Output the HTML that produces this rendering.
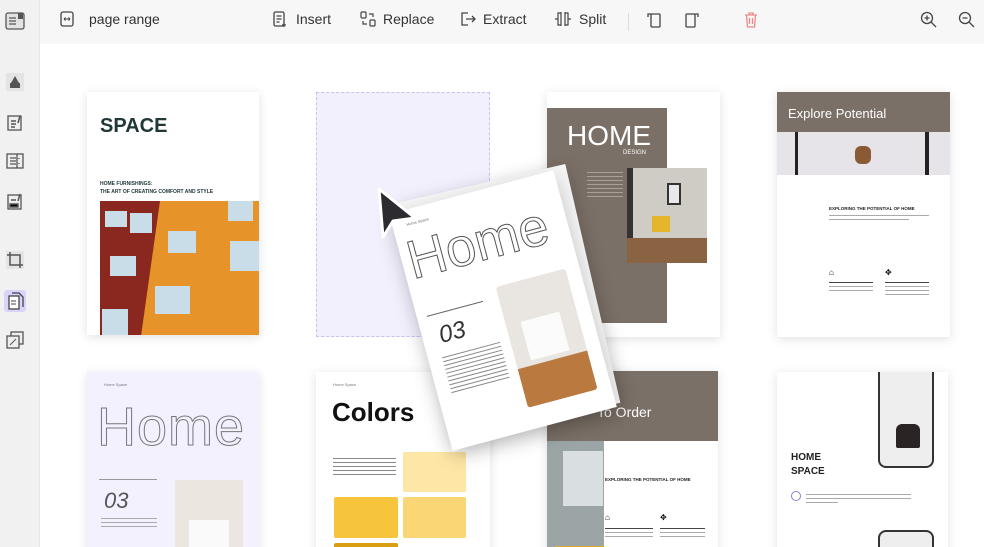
<!DOCTYPE html>
<html><head><meta charset="utf-8"><style>
*{margin:0;padding:0;box-sizing:border-box}
html,body{width:984px;height:547px;overflow:hidden}
body{background:#fff;font-family:"Liberation Sans",sans-serif;position:relative}
.side{position:absolute;left:0;top:0;width:40px;height:547px;background:#f1f1f1;border-right:1px solid #e6e6e6;z-index:5}
.sic{position:absolute;left:6px;width:18px;height:18px}
.top{position:absolute;left:40px;top:0;width:944px;height:44px;background:#f7f7f7;z-index:5}
.tb{position:absolute;top:11px;font-size:14px;color:#333;display:flex;align-items:center;gap:7px}
.pg{position:absolute;background:#fff;box-shadow:0 2px 10px rgba(0,0,0,.12)}
.a{position:absolute}
.lines div{height:1px;background:#aaa;margin-bottom:3px}
</style></head><body>
<div class="side">
 <svg class="sic" style="top:12px;left:5px;width:20px;height:18px" viewBox="0 0 20 18"><rect x="1" y="1" width="18" height="16" rx="2" fill="#e2e2e2" stroke="#555" stroke-width="1.3"/><path d="M4 6h7M4 9h7M4 12h7" stroke="#555" stroke-width="1.3"/><rect x="13" y="1" width="5" height="6" fill="#555"/></svg>
 <svg class="sic" style="top:73px" viewBox="0 0 18 18"><rect x="0" y="0" width="18" height="18" fill="#e4e4e4"/><path d="M9 3l4 7H5z M4 10h10v5H4z" fill="#555"/></svg>
 <svg class="sic" style="top:114px" viewBox="0 0 18 18"><rect x="2" y="2" width="13" height="14" fill="#eee" stroke="#555" stroke-width="1.3"/><path d="M5 7h5M5 10h5M5 13h4M14 2l-2 7" stroke="#555" stroke-width="1.5"/></svg>
 <svg class="sic" style="top:152px" viewBox="0 0 18 18"><rect x="1" y="2" width="16" height="14" fill="#eee" stroke="#555" stroke-width="1.3"/><path d="M4 6h6M4 9h6M4 12h6M13 6v1M13 11v1M11 2v14" stroke="#555" stroke-width="1.3"/></svg>
 <svg class="sic" style="top:193px" viewBox="0 0 18 18"><rect x="2" y="2" width="13" height="14" fill="#eee" stroke="#555" stroke-width="1.3"/><path d="M5 7h5M4 11h8v3H4zM14 1l-2 7" stroke="#555" stroke-width="1.5"/></svg>
 <svg class="sic" style="top:251px" viewBox="0 0 18 18"><rect width="18" height="18" fill="#e4e4e4"/><path d="M4 1v13h13M1 4h13v13" fill="none" stroke="#555" stroke-width="1.5"/></svg>
 <div class="a" style="left:4px;top:290px;width:22px;height:22px;background:#dcd3fb;border-radius:3px"></div>
 <svg class="sic" style="top:292px;left:7px" viewBox="0 0 18 18"><rect x="2" y="4" width="10" height="13" fill="#fff" stroke="#444" stroke-width="1.3"/><path d="M5 1h7l4 4v10" fill="none" stroke="#444" stroke-width="1.3"/><path d="M4 9h5M4 12h5" stroke="#444"/></svg>
 <svg class="sic" style="top:331px" viewBox="0 0 18 18"><rect x="5" y="1" width="12" height="12" fill="#eee" stroke="#555" stroke-width="1.3"/><rect x="1" y="5" width="12" height="12" fill="#eee" stroke="#555" stroke-width="1.3"/><path d="M4 14l6-6" stroke="#555"/></svg>
</div>
<div class="top">
 <div class="tb" style="left:20px"><svg width="14" height="16" viewBox="0 0 14 16"><rect x="1" y="1" width="12" height="14" rx="2" fill="none" stroke="#444" stroke-width="1.3"/><path d="M4 8h6M4 8l1.5-1.5M4 8l1.5 1.5M10 8l-1.5-1.5M10 8l-1.5 1.5" stroke="#444"/></svg><span style="margin-left:8px">page range</span></div>
 <div class="tb" style="left:233px"><svg width="14" height="16" viewBox="0 0 14 16"><rect x="1" y="1" width="10" height="14" rx="1.5" fill="none" stroke="#444" stroke-width="1.3"/><path d="M3.5 5h5M3.5 8h5M3.5 11h3M11 12v4M9 14h4" stroke="#444" stroke-width="1.2"/></svg><span style="margin-left:2px">Insert</span></div>
 <div class="tb" style="left:320px"><svg width="16" height="16" viewBox="0 0 16 16"><rect x="1" y="1" width="5" height="6" rx="1" fill="none" stroke="#444" stroke-width="1.2"/><rect x="10" y="9" width="5" height="6" rx="1" fill="none" stroke="#444" stroke-width="1.2"/><path d="M9 3h4v3M3 10v3h4" fill="none" stroke="#444" stroke-width="1.2"/></svg><span>Replace</span></div>
 <div class="tb" style="left:420px"><svg width="16" height="16" viewBox="0 0 16 16"><path d="M8 2H2v12h6" fill="none" stroke="#444" stroke-width="1.3"/><path d="M6 8h9M12 5l3 3-3 3" fill="none" stroke="#444" stroke-width="1.3"/></svg><span>Extract</span></div>
 <div class="tb" style="left:514px"><svg width="18" height="16" viewBox="0 0 18 16"><path d="M7 1v14M11 1v14M7 2H4v12h3M11 2h3v12h-3M1 8h3M14 8h3" fill="none" stroke="#444" stroke-width="1.2"/></svg><span>Split</span></div>
 <div class="a" style="left:588px;top:13px;width:1px;height:18px;background:#ddd"></div>
 <svg class="a" style="left:606px;top:11px" width="16" height="18" viewBox="0 0 16 18"><rect x="5" y="3" width="9" height="13" rx="1" fill="none" stroke="#444" stroke-width="1.3"/><path d="M5 3H2v3" fill="none" stroke="#444" stroke-width="1.3"/></svg>
 <svg class="a" style="left:644px;top:11px" width="16" height="18" viewBox="0 0 16 18"><rect x="2" y="3" width="9" height="13" rx="1" fill="none" stroke="#444" stroke-width="1.3"/><path d="M11 3h3v3" fill="none" stroke="#444" stroke-width="1.3"/></svg>
 <svg class="a" style="left:704px;top:11px" width="14" height="17" viewBox="0 0 14 17"><path d="M1 4h12M5 4V2h4v2M2.5 4l1 12h7l1-12M5.5 7v6M8.5 7v6" fill="none" stroke="#ec8a8a" stroke-width="1.3"/></svg>
 <svg class="a" style="left:880px;top:11px" width="17" height="17" viewBox="0 0 17 17"><circle cx="7" cy="7" r="5.5" fill="none" stroke="#444" stroke-width="1.3"/><path d="M11 11l5 5M4.5 7h5M7 4.5v5" stroke="#444" stroke-width="1.3"/></svg>
 <svg class="a" style="left:918px;top:11px" width="17" height="17" viewBox="0 0 17 17"><circle cx="7" cy="7" r="5.5" fill="none" stroke="#444" stroke-width="1.3"/><path d="M11 11l5 5M4.5 7h5" stroke="#444" stroke-width="1.3"/></svg>
</div>

<!-- Row 1 -->
<div class="pg" style="left:87px;top:92px;width:172px;height:243px">
 <div class="a" style="left:13px;top:23px;font-size:20px;font-weight:bold;color:#213838">SPACE</div>
 <div class="a" style="left:13px;top:88px;font-size:5px;font-weight:bold;color:#213838;line-height:8px">HOME FURNISHINGS:<br>THE ART OF CREATING COMFORT AND STYLE</div>
 <div class="a" style="left:13px;top:109px;width:159px;height:134px;background:#e6942a;overflow:hidden">
  <div class="a" style="left:0;top:0;width:60px;height:140px;background:#8a2820;transform:skewX(-8deg);transform-origin:top left"></div>
  <div class="a" style="left:5px;top:10px;width:22px;height:16px;background:#c9dde8"></div>
  <div class="a" style="left:30px;top:12px;width:22px;height:20px;background:#c9dde8"></div>
  <div class="a" style="left:10px;top:55px;width:26px;height:20px;background:#c9dde8"></div>
  <div class="a" style="left:68px;top:30px;width:28px;height:22px;background:#c9dde8"></div>
  <div class="a" style="left:130px;top:40px;width:29px;height:30px;background:#c9dde8"></div>
  <div class="a" style="left:55px;top:85px;width:35px;height:28px;background:#c9dde8"></div>
  <div class="a" style="left:128px;top:0;width:25px;height:20px;background:#c9dde8"></div>
  <div class="a" style="left:2px;top:108px;width:26px;height:26px;background:#c9dde8"></div>
 </div>
</div>
<div class="a" style="left:316px;top:92px;width:174px;height:245px;background:#f2f0fd;border:1px dashed #c8c0ef"></div>
<div class="pg" style="left:547px;top:92px;width:173px;height:245px">
 <div class="a" style="left:0;top:16px;width:120px;height:215px;background:#7b7067"></div>
 <div class="a" style="left:20px;top:28px;font-size:28px;color:#fff">HOME</div>
 <div class="a" style="left:76px;top:58px;font-size:6px;color:#fff">DESIGN</div>
 <div class="a lines" style="left:40px;top:80px;width:36px"><div style="background:#aaa09a"></div><div style="background:#aaa09a"></div><div style="background:#aaa09a"></div><div style="background:#aaa09a"></div><div style="background:#aaa09a"></div><div style="background:#aaa09a"></div><div style="background:#aaa09a"></div></div>
 <div class="a" style="left:80px;top:76px;width:80px;height:95px;background:#cfcbc5">
  <div class="a" style="left:0;top:0;width:6px;height:95px;background:#333"></div>
  <div class="a" style="left:0;top:70px;width:80px;height:25px;background:#8a6442"></div>
  <div class="a" style="left:25px;top:48px;width:18px;height:16px;background:#e5b62b"></div>
  <div class="a" style="left:40px;top:15px;width:14px;height:22px;border:2px solid #333;background:#e8e8e8"></div>
 </div>
</div>
<div class="pg" style="left:777px;top:92px;width:173px;height:245px">
 <div class="a" style="left:0;top:0;width:173px;height:40px;background:#7b7067"></div>
 <div class="a" style="left:11px;top:14px;font-size:13px;color:#fff">Explore Potential</div>
 <div class="a" style="left:0;top:40px;width:173px;height:43px;background:#e6e4e8">
  <div class="a" style="left:18px;top:0;width:3px;height:43px;background:#222"></div>
  <div class="a" style="left:148px;top:0;width:4px;height:43px;background:#222"></div>
  <div class="a" style="left:78px;top:14px;width:16px;height:18px;background:#8a5a35;border-radius:6px"></div>
 </div>
 <div class="a" style="left:52px;top:114px;font-size:4.5px;font-weight:bold;color:#222">EXPLORING THE POTENTIAL OF HOME</div>
 <div class="a lines" style="left:52px;top:123px;width:100px"><div></div><div style="width:80%"></div></div>
 <div class="a" style="left:52px;top:176px;font-size:8px">⌂</div><div class="a" style="left:108px;top:176px;font-size:8px">✥</div>
 <div class="a lines" style="left:52px;top:190px;width:44px"><div style="background:#444"></div><div></div><div></div></div>
 <div class="a lines" style="left:108px;top:190px;width:44px"><div style="background:#444"></div><div></div><div></div><div></div></div>
</div>

<!-- Row 2 -->
<div class="pg" style="left:87px;top:372px;width:172px;height:190px;background:#f4f1ff">
 <div class="a" style="left:17px;top:10px;font-size:4px;color:#777">Home Space</div>
 <div class="a" style="left:10px;top:24px;font-size:54px;color:#f4f1ff;-webkit-text-stroke:1px #777;letter-spacing:1px">Home</div>
 <div class="a" style="left:12px;top:107px;width:58px;height:1px;background:#999"></div>
 <div class="a" style="left:17px;top:116px;font-size:22px;font-style:italic;color:#555">03</div>
 <div class="a lines" style="left:14px;top:146px;width:56px"><div></div><div></div><div></div></div>
 <div class="a" style="left:88px;top:108px;width:68px;height:90px;background:#ebe6e0"><div class="a" style="left:14px;top:40px;width:40px;height:30px;background:#fafafa"></div></div>
</div>
<div class="pg" style="left:316px;top:372px;width:174px;height:190px">
 <div class="a" style="left:17px;top:10px;font-size:4px;color:#777">Home Space</div>
 <div class="a" style="left:16px;top:25px;font-size:26px;font-weight:bold;color:#111">Colors</div>
 <div class="a lines" style="left:17px;top:86px;width:63px"><div style="background:#888"></div><div style="background:#888"></div><div style="background:#888"></div><div style="background:#888"></div><div style="background:#888"></div></div>
 <div class="a" style="left:87px;top:80px;width:63px;height:40px;background:#fde6a6;border-radius:2px"></div>
 <div class="a" style="left:18px;top:125px;width:64px;height:41px;background:#f6c53c;border-radius:2px"></div>
 <div class="a" style="left:87px;top:125px;width:63px;height:41px;background:#fad774;border-radius:2px"></div>
 <div class="a" style="left:18px;top:171px;width:64px;height:20px;background:#d99e12;border-radius:2px"></div>
</div>
<div class="pg" style="left:547px;top:371px;width:171px;height:190px">
 <div class="a" style="left:0;top:0;width:171px;height:70px;background:#7b7067"></div>
 <div class="a" style="left:50px;top:33px;font-size:14px;color:#fff">To Order</div>
 <div class="a" style="left:0;top:70px;width:57px;height:120px;background:#9ba5a5"><div class="a" style="left:16px;top:10px;width:40px;height:55px;background:#d9dfe0"></div><div class="a" style="left:8px;top:105px;width:49px;height:15px;background:#e5a92c"></div></div>
 <div class="a" style="left:58px;top:106px;font-size:4.5px;font-weight:bold;color:#222">EXPLORING THE POTENTIAL OF HOME</div>
 <div class="a" style="left:58px;top:142px;font-size:8px">⌂</div><div class="a" style="left:113px;top:142px;font-size:8px">✥</div>
 <div class="a lines" style="left:58px;top:157px;width:48px"><div style="background:#444"></div><div></div><div></div></div>
 <div class="a lines" style="left:113px;top:157px;width:45px"><div style="background:#444"></div><div></div><div></div></div>
</div>
<div class="pg" style="left:777px;top:372px;width:171px;height:190px">
 <div class="a" style="left:101px;top:0;width:56px;height:96px;border:2px solid #333;border-top:none;border-radius:0 0 8px 8px;background:#eeeeee"><div class="a" style="left:16px;top:52px;width:24px;height:24px;background:#2b2424;border-radius:6px 6px 2px 2px"></div></div>
 <div class="a" style="left:14px;top:79px;font-size:10px;font-weight:bold;color:#222;line-height:14px">HOME<br>SPACE</div>
 <div class="a" style="left:14px;top:119px;width:10px;height:10px;border:1.3px solid #8b7fd6;border-radius:50%"></div>
 <div class="a lines" style="left:29px;top:122px;width:105px"><div></div><div></div><div style="width:30%"></div></div>
 <div class="a" style="left:101px;top:158px;width:56px;height:40px;border:2px solid #333;border-radius:8px;background:#eee"></div>
</div>

<!-- Dragged page -->
<div class="a" style="left:425px;top:180px;width:170px;height:245px;background:#f6f6f6;transform:rotate(-13deg);box-shadow:0 6px 20px rgba(0,0,0,.18)"></div>
<div class="a" style="left:418px;top:188px;width:170px;height:245px;background:#fff;transform:rotate(-15deg);box-shadow:0 6px 20px rgba(0,0,0,.2);overflow:hidden">
 <div class="a" style="left:14px;top:12px;font-size:4px;color:#777">Home Space</div>
 <div class="a" style="left:6px;top:20px;font-size:54px;color:#fff;-webkit-text-stroke:1px #555">Home</div>
 <div class="a" style="left:10px;top:108px;width:58px;height:1px;background:#666"></div>
 <div class="a" style="left:17px;top:117px;font-size:24px;font-style:italic;color:#333">03</div>
 <div class="a lines" style="left:14px;top:152px;width:60px"><div style="background:#888"></div><div style="background:#888"></div><div style="background:#888"></div><div style="background:#888"></div><div style="background:#888"></div><div style="background:#888"></div><div style="background:#888"></div><div style="background:#888"></div><div style="background:#888"></div><div style="background:#888"></div></div>
 <div class="a" style="left:84px;top:98px;width:72px;height:125px;background:#e9e5e0;border-radius:3px;overflow:hidden">
  <div class="a" style="left:15px;top:40px;width:40px;height:40px;background:#fbfbfb"></div>
  <div class="a" style="left:0;top:85px;width:72px;height:40px;background:#b9793f"></div>
 </div>
</div>
<svg class="a" style="left:376px;top:186px" width="46" height="56" viewBox="0 0 46 56"><path d="M3 3l4 48 10-16 22-3z" fill="#2b2b30" stroke="#fff" stroke-width="3" stroke-linejoin="round"/></svg>
</body></html>
